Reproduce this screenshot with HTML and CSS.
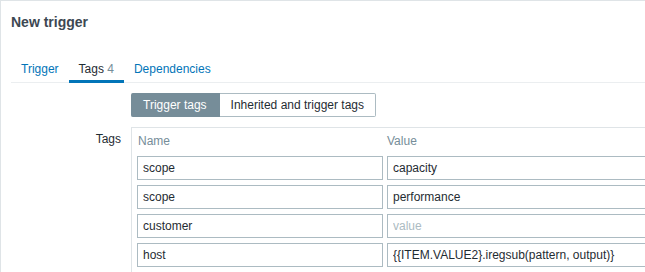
FILE: index.html
```html
<html>
<head>
	<link rel="stylesheet" href="styles.css">
</head>
<body>
	<div class="page">
		<h1 class="title">New trigger</h1>
		<ul class="tabs">
			<li><a href="#">Trigger</a></li>
			<li class="active"><a href="#">Tags <span class="count">4</span></a></li>
			<li><a href="#">Dependencies</a></li>
		</ul>
		<div class="form">
			<div class="form-row">
				<div class="form-label"></div>
				<div class="form-field">
					<div class="segmented">
						<button class="selected">Trigger tags</button>
						<button>Inherited and trigger tags</button>
					</div>
				</div>
			</div>
			<div class="form-row">
				<label class="form-label">Tags</label>
				<div class="form-field">
					<div class="tags-table">
						<div class="tags-head">
							<div class="col-name">Name</div>
							<div class="col-value">Value</div>
						</div>
						<div class="tags-row">
							<input class="col-name" type="text" value="scope">
							<input class="col-value" type="text" value="capacity">
						</div>
						<div class="tags-row">
							<input class="col-name" type="text" value="scope">
							<input class="col-value" type="text" value="performance">
						</div>
						<div class="tags-row">
							<input class="col-name" type="text" value="customer">
							<input class="col-value" type="text" placeholder="value">
						</div>
						<div class="tags-row">
							<input class="col-name" type="text" value="host">
							<input class="col-value" type="text" value="{{ITEM.VALUE2}.iregsub(pattern, output)}">
						</div>
					</div>
				</div>
			</div>
		</div>
	</div>
</body>
</html>
```

FILE: styles.css
```css
html, body {
	margin: 0;
	height: 100%;
	overflow: hidden;
	background: #fff;
}
body {
	font-family: "Liberation Sans", Arial, sans-serif;
	font-size: 12px;
	line-height: 14px;
	color: #1f2c33;
}
.page {
	height: 100%;
	border-top: 1px solid #dfe4e7;
	border-left: 1px solid #dfe4e7;
	padding: 12px 0 0 10px;
	box-sizing: border-box;
}
.title {
	margin: 0;
	font-size: 14px;
	line-height: 18px;
	font-weight: bold;
	color: #3d4852;
}
.tabs {
	display: flex;
	list-style: none;
	margin: 30px 0 0 0;
	padding: 0;
	border-bottom: 1px solid #ebeef0;
}
.tabs li {
	padding: 1px 10px 4px 10px;
	border-bottom: 3px solid transparent;
	margin-bottom: -1px;
}
.tabs li.active {
	border-bottom-color: #0275b8;
}
.tabs a {
	color: #0275b8;
	text-decoration: none;
}
.tabs li.active a {
	color: #1f2c33;
}
.count {
	color: #768d99;
}
.form {
	display: flex;
	flex-direction: column;
	gap: 10px;
	padding-top: 10px;
}
.form-row {
	display: flex;
	gap: 10px;
}
.form-label {
	width: 110px;
	flex: none;
	text-align: right;
	padding-top: 5px;
}
.form-field {
	flex: none;
}
.segmented {
	display: flex;
}
.segmented button {
	font: inherit;
	height: 24px;
	margin: 0;
	padding: 0 11px;
	background: #fff;
	color: #1f2c33;
	border: 1px solid #acbbc2;
	border-left: none;
	border-radius: 0 2px 2px 0;
}
.segmented button.selected {
	background: #768d99;
	border-color: #768d99;
	color: #fff;
	padding: 0 12px;
	border-radius: 2px 0 0 2px;
}
.tags-table {
	border-top: 1px solid #dfe4e7;
	border-left: 1px solid #dfe4e7;
	padding: 5px 0 10px 5px;
	width: 700px;
	display: flex;
	flex-direction: column;
	gap: 5px;
}
.tags-head {
	display: flex;
	gap: 4px;
	color: #768d99;
	padding-top: 1px;
	margin-bottom: 3px;
}
.tags-head .col-name {
	padding-left: 1px;
}
.tags-row {
	display: flex;
	gap: 4px;
}
.col-name {
	width: 246px;
	box-sizing: border-box;
}
.col-value {
	width: 420px;
	box-sizing: border-box;
}
.tags-row input {
	font: inherit;
	height: 24px;
	margin: 0;
	padding: 0 5px;
	border: 1px solid #acbbc2;
	color: #1f2c33;
	background: #fff;
	outline: none;
}
.tags-row input::placeholder {
	color: #acbbc2;
}
```
